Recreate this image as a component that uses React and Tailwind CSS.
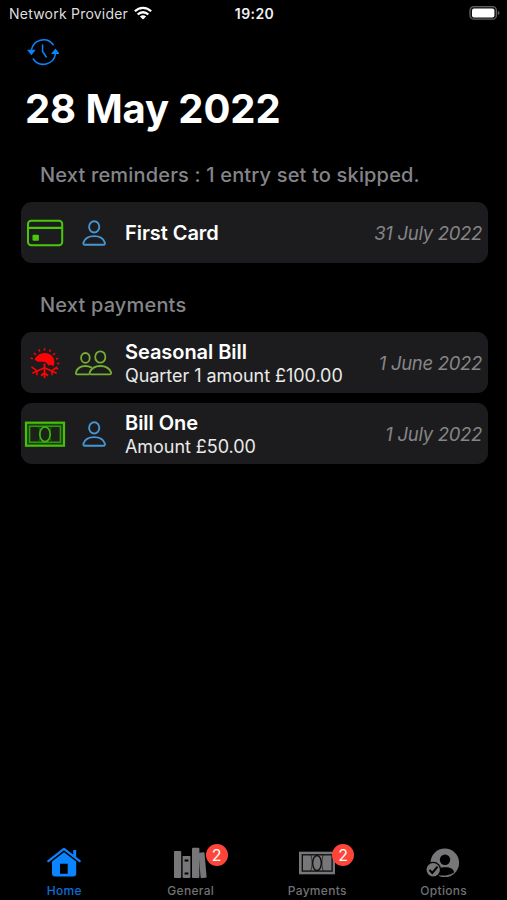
import React from 'react';

function HistoryIcon() {
  return (
    <svg width="32" height="28" viewBox="27 38.5 32 28" fill="none" stroke="#0a84ff" strokeWidth="1.5" strokeLinecap="round">
      <path d="M31.3 51A12.3 12.3 0 0 1 53.3 45.2" />
      <path d="M55.5 54A12.3 12.3 0 0 1 33.2 59.5" />
      <path d="M42.6 45.5V52L46.3 57.5" />
      <path d="M28.6 51H34.2L31.4 54.6Z" fill="#0a84ff" />
      <path d="M52.6 53.8H58.2L55.4 50.2Z" fill="#0a84ff" />
    </svg>
  );
}

function CardIcon() {
  return (
    <svg width="38" height="28" viewBox="26 218.5 38 28" fill="none" stroke="#4bc70b" strokeWidth="2">
      <rect x="28" y="220.2" width="34.2" height="24.6" rx="3.2" />
      <path d="M28 227.3H62" strokeWidth="2.2" />
      <rect x="32.5" y="234.3" width="6.4" height="6" rx="1" fill="#4bc70b" stroke="none" />
    </svg>
  );
}

function PersonIcon() {
  return (
    <svg width="26" height="28" viewBox="80.5 218.5 26 28" fill="none" stroke="#4696d2" strokeWidth="1.9" strokeLinejoin="round">
      <ellipse cx="93.7" cy="226.4" rx="5.1" ry="5.6" />
      <path d="M84.4 244.3C83 244.3 82.6 243.2 83 242C84.3 238 88.4 235.6 93.7 235.6S103 238 104.3 242C104.7 243.2 104.3 244.3 102.9 244.3Z" />
    </svg>
  );
}

function PeopleIcon() {
  return (
    <svg width="40" height="28" viewBox="74 349 40 28" fill="none" stroke="#75af31" strokeWidth="1.8" strokeLinejoin="round">
      <ellipse cx="85.4" cy="357.9" rx="4.3" ry="4.9" />
      <ellipse cx="100.3" cy="357" rx="5.1" ry="5.7" />
      <path d="M88.6 374.4H77.2C76 374.4 75.6 373.4 76 372.2C77.2 368.3 80.8 366 85.4 366C87.6 366 89.5 366.5 91.1 367.4" strokeLinecap="round" />
      <path d="M91.2 374.4C89.9 374.4 89.3 373.4 89.8 372.2C91.4 368.2 95.2 366 100.3 366S109.4 368.2 111 372.2C111.5 373.4 110.8 374.4 109.6 374.4Z" />
    </svg>
  );
}

function SeasonIcon() {
  return (
    <svg width="32" height="32" viewBox="29 347 32 32" fill="none" stroke="#fe0303" strokeWidth="1.8">
      {/* sun on the upper half */}
      <path d="M34.6 359.8C36 355.8 40 353 44.8 353C50.8 353 54.8 357.5 54.4 362.8C54.3 364.4 53.8 365.6 53 366.4C51.8 364.9 50 364.6 48.4 365.6C47 362.2 44 361.4 41.5 361.8C39.4 362 37 361.8 34.6 359.8Z" fill="#fe0303" stroke="none" />
      <path d="M44.5 348.2V350.6M38.8 349.4L39.8 351.6M33.9 353L35.8 354.8M30.7 358L32.9 358.9M50.5 349.5L49.5 351.7M55 353.2L53.2 355M58.2 358.2L56 359.1M59.4 363.6H57M58 369L56 368.2" strokeWidth="1.5" />
      {/* snowflake on the lower half */}
      <path d="M44.5 363.5V378M44.5 367.8L32.3 373.2M44.5 367.8L56.7 373.2M41 375.8L44.5 372.8L48 375.8" />
      <path d="M31.5 366.9L37.2 370.8L36.8 375.3M57.2 366.9L51.8 370.8L52.2 375.3" strokeWidth="1.5" />
    </svg>
  );
}

function CashIcon() {
  return (
    <svg width="42" height="28" viewBox="24 420 42 28" fill="none" stroke="#3db50b" strokeWidth="2">
      <rect x="26" y="422.7" width="38" height="23" fill="#184410" stroke="#49bd0b" strokeWidth="2.2" />
      <rect x="29.6" y="426.3" width="30.8" height="15.9" fill="#1c221a" stroke="#32990a" strokeWidth="1.5" />
      <path d="M38.4 427C41 429 41 439.5 38.4 441.6M51.6 427C49 429 49 439.5 51.6 441.6" stroke="#216a0b" strokeWidth="1" />
      <ellipse cx="45" cy="434.2" rx="5.2" ry="7.4" strokeWidth="1.7" />
    </svg>
  );
}

function HomeIcon() {
  return (
    <svg width="36" height="34" viewBox="46 845 36 34" fill="none">
      <path d="M48.3 861.2L64 848.8L79.7 861.2" stroke="#0a84ff" strokeWidth="2.2" strokeLinecap="round" strokeLinejoin="round" />
      <path d="M73.2 850H76.2V857.6L73.2 855.2Z" fill="#0a84ff" />
      <path d="M52 861.5L64 852.2L76.2 861.5V873.5Q76.2 876.5 73.2 876.5H55Q52 876.5 52 873.5ZM60 863.7V873.8H67.7V863.7Z" fill="#0a84ff" fillRule="evenodd" />
    </svg>
  );
}

function BooksIcon() {
  return (
    <svg width="36" height="34" viewBox="173 845 36 34" fill="#777779">
      <rect x="174" y="851" width="7.2" height="27" rx="1" />
      <path d="M182.6 856H190.4V877Q190.4 878 189.4 878H183.6Q182.6 878 182.6 877Z" />
      <path d="M184.6 860.5H188.4M184.6 873.5H188.4" stroke="#000" strokeWidth="1.8" />
      <rect x="192" y="847.8" width="7.4" height="30.2" rx="1" />
      <rect x="200.6" y="852.5" width="6" height="25.5" rx="1" transform="rotate(-5 203 877)" />
    </svg>
  );
}

function PaymentsIcon() {
  return (
    <svg width="38" height="34" viewBox="298 845 38 34" fill="none">
      <rect x="299" y="851.7" width="36" height="22.6" fill="#777779" />
      <g stroke="#0c0c0c" strokeWidth="1.3">
        <rect x="302.3" y="854.8" width="29.8" height="16.3" />
        <ellipse cx="317" cy="863" rx="4.3" ry="7.5" />
        <path d="M310.5 855C312.6 858 312.6 868 310.5 871M323.5 855C321.4 858 321.4 868 323.5 871" strokeWidth="0.7" />
      </g>
    </svg>
  );
}

function OptionsIcon() {
  return (
    <svg width="36" height="34" viewBox="426 845 36 34" fill="none">
      <circle cx="444.8" cy="862.8" r="14.3" fill="#777779" />
      <circle cx="445" cy="859.7" r="5.2" fill="#000" />
      <path d="M435 874.5C435.5 869.2 439.5 867.3 445 867.3S453.6 869 454.2 872.5C450 875.8 441 876.5 435 874.5Z" fill="#000" />
      <circle cx="433.2" cy="869.8" r="8" fill="#000" />
      <circle cx="433.2" cy="869.8" r="6.7" fill="#777779" />
      <path d="M429.5 870L432.3 873L437.5 866.6" stroke="#000" strokeWidth="2" />
    </svg>
  );
}

function StatusBar() {
  return (
    <div className="grid grid-cols-3 items-center h-7 pb-[2px] pl-[9px] pr-[7px] text-[14px]">
      <div className="flex items-center gap-[6px] whitespace-nowrap text-[#dedede]">
        <span className="tracking-[0.22px]">Network Provider</span>
        <svg width="18" height="14" viewBox="0 0 18 14" fill="none" stroke="#fff" strokeWidth="2.3">
          <path d="M0.9 5.3C5.4 0.7 12.6 0.7 17.1 5.3" />
          <path d="M3.7 8.5C6.7 5.5 11.3 5.5 14.3 8.5" />
          <path d="M9 13.5L5.9 10.5C7.7 8.9 10.3 8.9 12.1 10.5Z" fill="#fff" stroke="none" />
        </svg>
      </div>
      <div className="text-center font-semibold tracking-[0.4px] text-[#f2f2f2]">19:20</div>
      <svg className="justify-self-end" width="31" height="16" viewBox="0 0 31 16">
        <rect x="1" y="1.6" width="26.4" height="12.6" rx="3.8" fill="#111" stroke="#606060" strokeWidth="1.3" />
        <rect x="3" y="3.4" width="22.4" height="9" rx="2" fill="#fff" />
        <path d="M28.8 5.7C31 6.6 31 9.2 28.8 10.1Z" fill="#606060" />
      </svg>
    </div>
  );
}

function EntryRow({ type, owner, title, detail, date }) {
  return (
    <div className="flex items-center h-[61px] rounded-[11px] bg-[#1c1c1e] pr-[6px]">
      <div className="flex justify-center w-12">{type}</div>
      <div className="flex justify-center w-[50px]">{owner}</div>
      <div className={`flex-1 pl-[6px] whitespace-nowrap ${detail ? 'pt-[2px]' : ''}`}>
        <div className="text-[20px] leading-6 font-semibold tracking-[-0.05px] text-white">{title}</div>
        {detail && <div className="text-[18px] leading-[23px] tracking-[-0.05px] text-[#eaeaea]">{detail}</div>}
      </div>
      <div className="pt-[2px] text-[18.5px] tracking-[-0.3px] italic whitespace-nowrap text-[#858587]">{date}</div>
    </div>
  );
}

function Tab({ icon, label, badge, active }) {
  return (
    <div className={`flex flex-col items-center ${active ? 'text-[#0a6fd8]' : 'text-[#717173]'}`}>
      <div className="relative">
        {icon}
        {badge && (
          <span className="absolute left-1/2 ml-[15px] top-[-1px] flex items-center justify-center size-[22px] rounded-full bg-[#ff453a] text-[16px] text-white">
            {badge}
          </span>
        )}
      </div>
      <span className="mt-[4px] text-[12px] leading-4 font-medium tracking-[0.3px]">{label}</span>
    </div>
  );
}

function App() {
  return (
    <div className="flex flex-col h-screen overflow-hidden bg-black font-['Inter','Liberation_Sans',sans-serif]">
      <StatusBar />

      <main className="flex-1 pl-[21px] pr-[19px]">
        <div className="pl-[6px] pt-[10px]">
          <HistoryIcon />
        </div>
        <h1 className="mt-[17px] pl-[4px] text-[40px] leading-[52px] font-bold tracking-[-0.1px] text-white">28 May 2022</h1>

        <h2 className="mt-[26px] pl-[19px] text-[20px] leading-7 font-medium tracking-[0.17px] text-[#858589]">
          Next reminders : 1 entry set to skipped.
        </h2>
        <div className="mt-[13px]">
          <EntryRow type={<CardIcon />} owner={<PersonIcon />} title="First Card" date="31 July 2022" />
        </div>

        <h2 className="mt-[28px] pl-[19px] text-[20px] leading-7 font-medium tracking-[0.17px] text-[#858589]">Next payments</h2>
        <div className="mt-[13px] flex flex-col gap-[10px]">
          <EntryRow
            type={<SeasonIcon />}
            owner={<PeopleIcon />}
            title="Seasonal Bill"
            detail="Quarter 1 amount £100.00"
            date="1 June 2022"
          />
          <EntryRow
            type={<CashIcon />}
            owner={<PersonIcon />}
            title="Bill One"
            detail="Amount £50.00"
            date="1 July 2022"
          />
        </div>
      </main>

      <nav className="grid grid-cols-4 h-[55px] pl-px">
        <Tab icon={<HomeIcon />} label="Home" active />
        <Tab icon={<BooksIcon />} label="General" badge="2" />
        <Tab icon={<PaymentsIcon />} label="Payments" badge="2" />
        <Tab icon={<OptionsIcon />} label="Options" />
      </nav>
    </div>
  );
}

export default App;
